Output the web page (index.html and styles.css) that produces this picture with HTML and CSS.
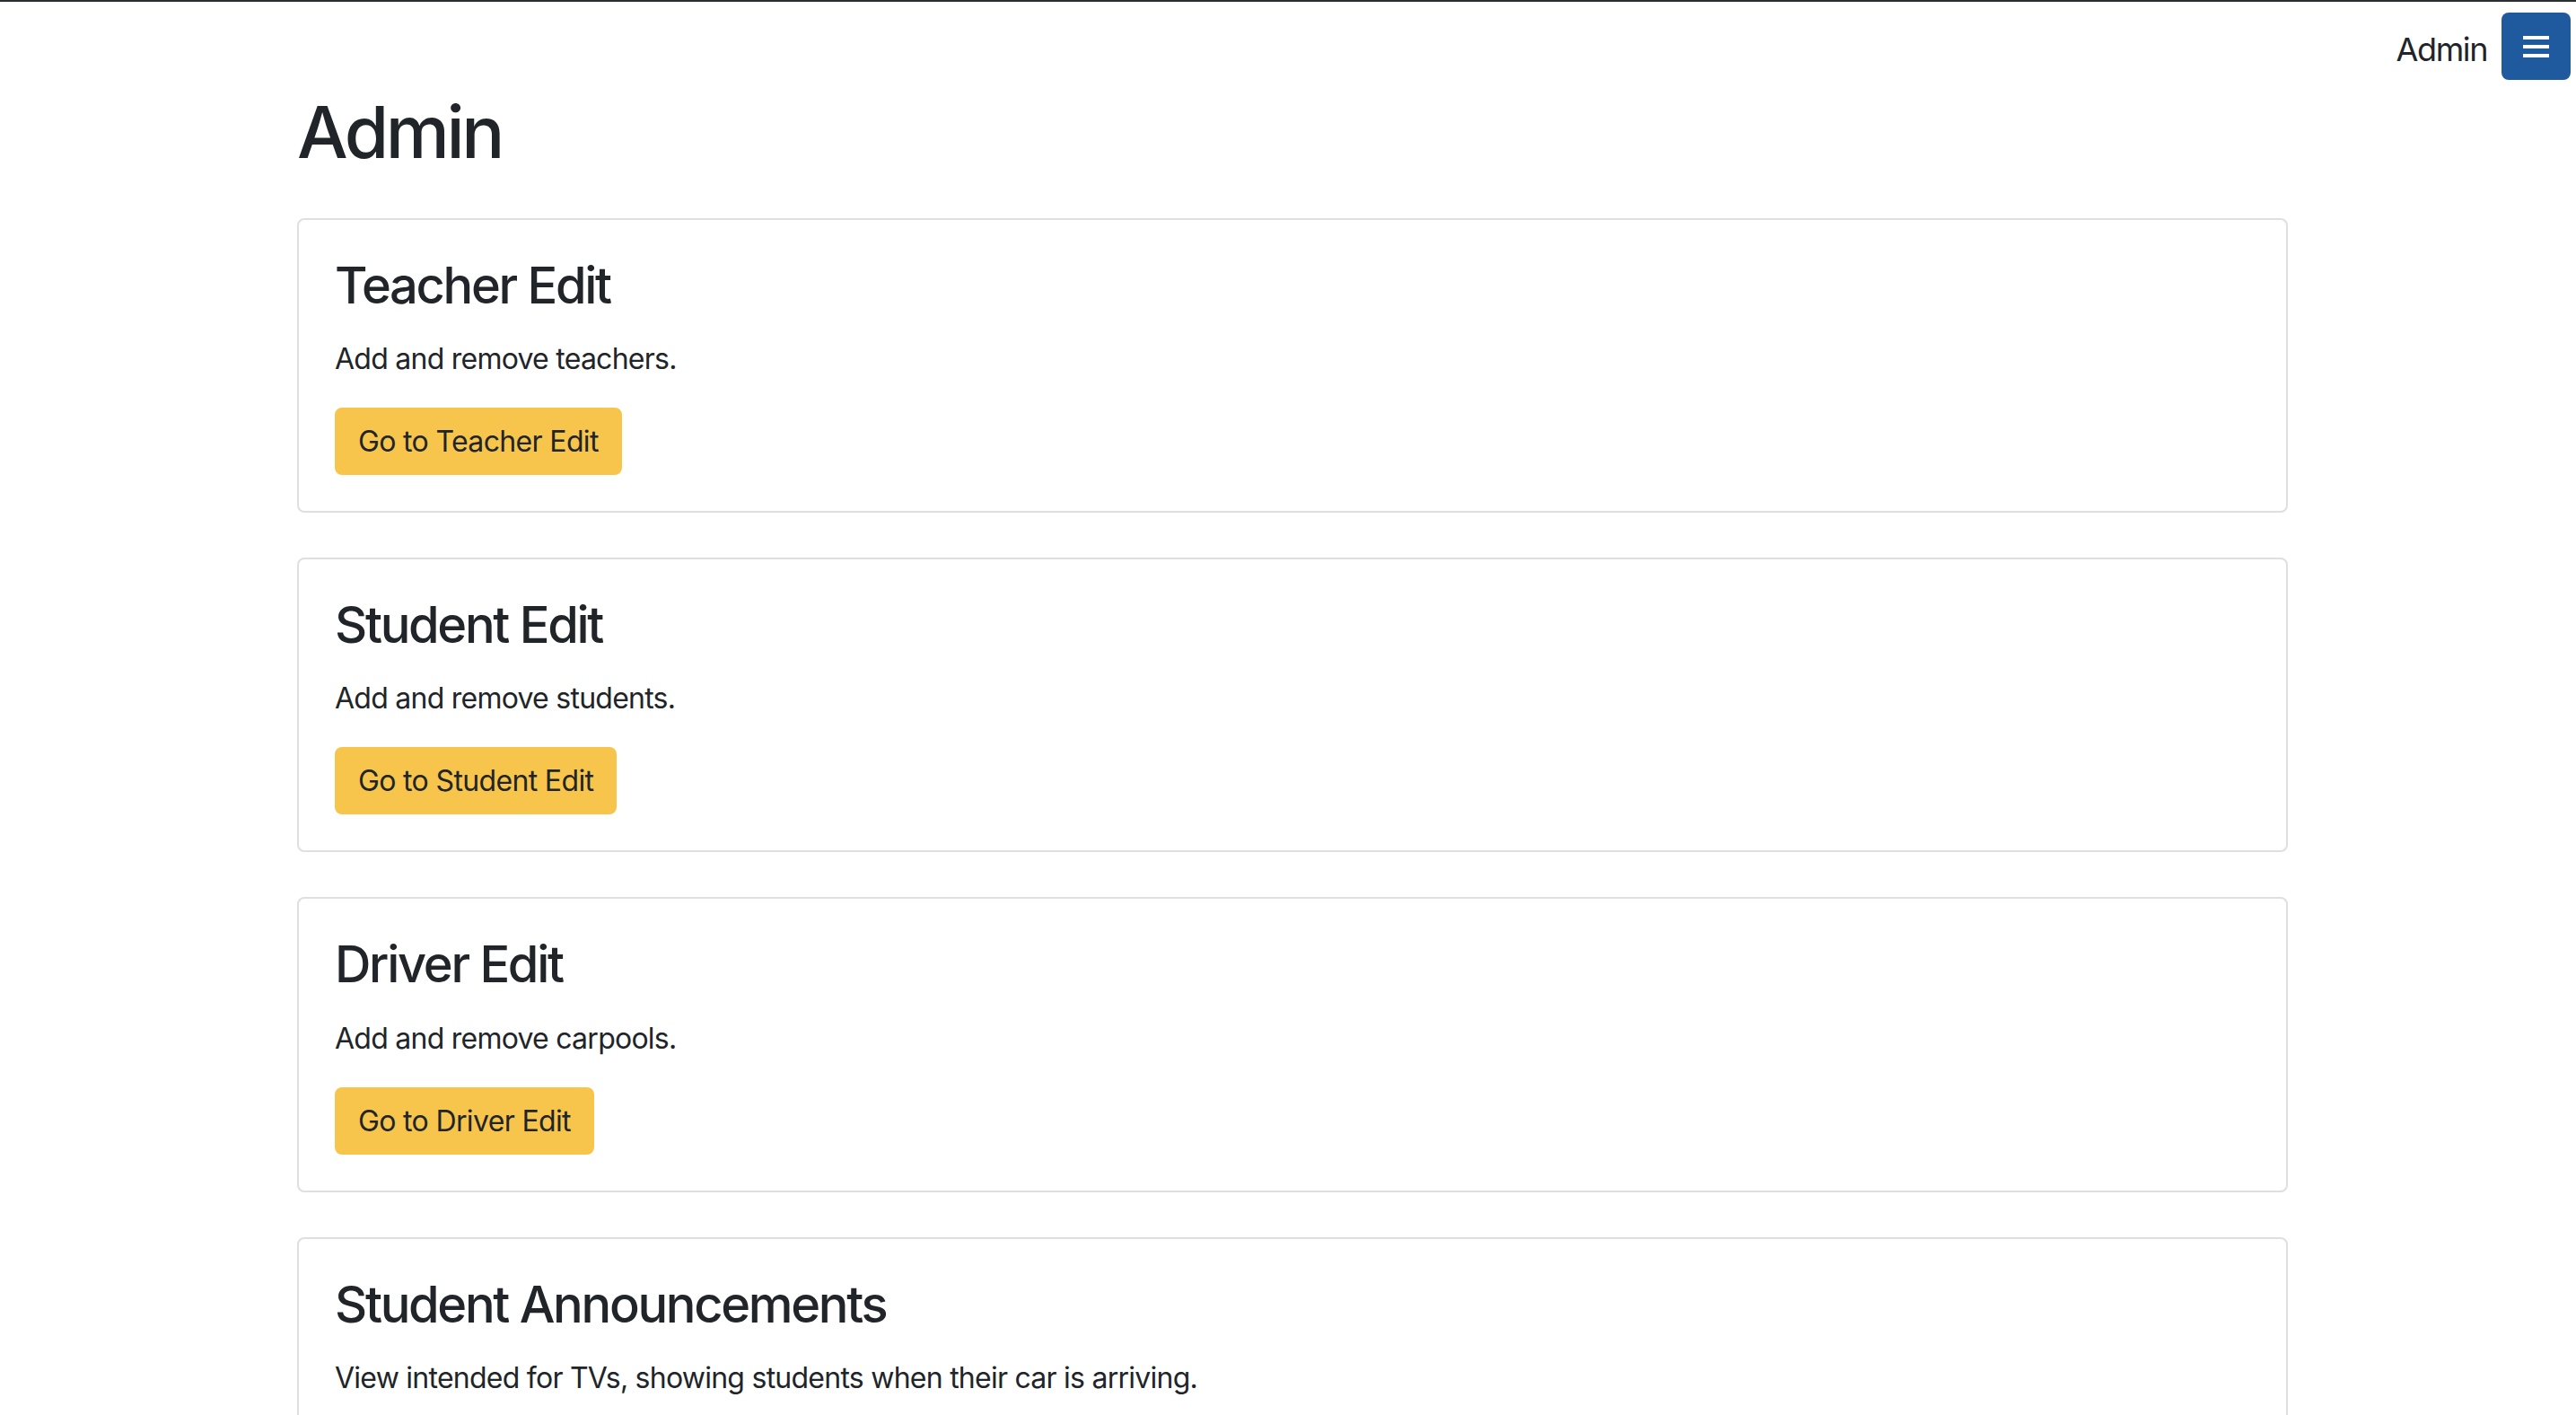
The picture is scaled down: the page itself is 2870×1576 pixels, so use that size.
FILE: index.html
```html
<!DOCTYPE html>
<html lang="en">
<head>
<meta charset="utf-8">
<title>Admin</title>
<link rel="stylesheet" href="styles.css">
</head>
<body>
<header class="topbar">
  <nav class="nav">
    <span class="nav-brand">Admin</span>
    <button class="toggler" type="button" aria-label="Toggle navigation">
      <svg class="toggler-icon" width="29" height="24" viewBox="0 0 29 24">
        <rect x="0" y="0" width="29" height="4"/>
        <rect x="0" y="10" width="29" height="4"/>
        <rect x="0" y="20" width="29" height="4"/>
      </svg>
    </button>
  </nav>
</header>
<main class="container">
  <h1 class="page-title">Admin</h1>
  <section class="card">
    <h3 class="card-title">Teacher Edit</h3>
    <p class="card-text">Add and remove teachers.</p>
    <a class="btn" href="#">Go to Teacher Edit</a>
  </section>
  <section class="card">
    <h3 class="card-title">Student Edit</h3>
    <p class="card-text">Add and remove students.</p>
    <a class="btn" href="#">Go to Student Edit</a>
  </section>
  <section class="card">
    <h3 class="card-title">Driver Edit</h3>
    <p class="card-text">Add and remove carpools.</p>
    <a class="btn" href="#">Go to Driver Edit</a>
  </section>
  <section class="card">
    <h3 class="card-title">Student Announcements</h3>
    <p class="card-text">View intended for TVs, showing students when their car is arriving.</p>
    <a class="btn" href="#">Go to Student Announcements</a>
  </section>
</main>
</body>
</html>
```
FILE: styles.css
```css
html {
  scrollbar-width: none;
}
html::-webkit-scrollbar {
  display: none;
}
body {
  margin: 0;
  font-family: Inter, "Noto Sans", "Liberation Sans", sans-serif;
  color: #212529;
  background: #ffffff;
}
.topbar {
  border-top: 2px solid #2a2d31;
}
.nav {
  display: flex;
  justify-content: flex-end;
  align-items: flex-start;
  padding: 12px 6px 0 0;
}
.nav-brand {
  font-size: 36px;
  line-height: 60px;
  margin: 11px 16px 0 0;
  letter-spacing: -1.4px;
}
.toggler {
  width: 77px;
  height: 75px;
  border: none;
  border-radius: 8px;
  background: #1f5a9e;
  display: flex;
  align-items: center;
  justify-content: center;
  padding: 0;
}
.toggler-icon {
  fill: #ffffff;
  display: block;
}
.container {
  width: 2218px;
  margin-left: 331px;
}
.page-title {
  font-size: 80px;
  font-weight: 500;
  line-height: 1.2;
  margin: 10px 0 48px;
  letter-spacing: -3.4px;
}
.card {
  border: 2px solid #dfdfdf;
  border-radius: 8px;
  padding: 40px;
  margin-bottom: 50px;
}
.card-title {
  font-size: 56px;
  font-weight: 500;
  line-height: 1.2;
  margin: 0 0 24px;
  letter-spacing: -2.3px;
}
.card-text {
  font-size: 32px;
  line-height: 48px;
  margin: 0 0 30px;
  letter-spacing: -0.75px;
}
.btn {
  display: inline-block;
  box-sizing: border-box;
  height: 75px;
  padding: 0 24px;
  border: 2px solid #f7c54b;
  border-radius: 8px;
  background: #f7c54b;
  color: #212529;
  font-size: 32px;
  line-height: 71px;
  text-decoration: none;
  letter-spacing: -0.65px;
}
```
